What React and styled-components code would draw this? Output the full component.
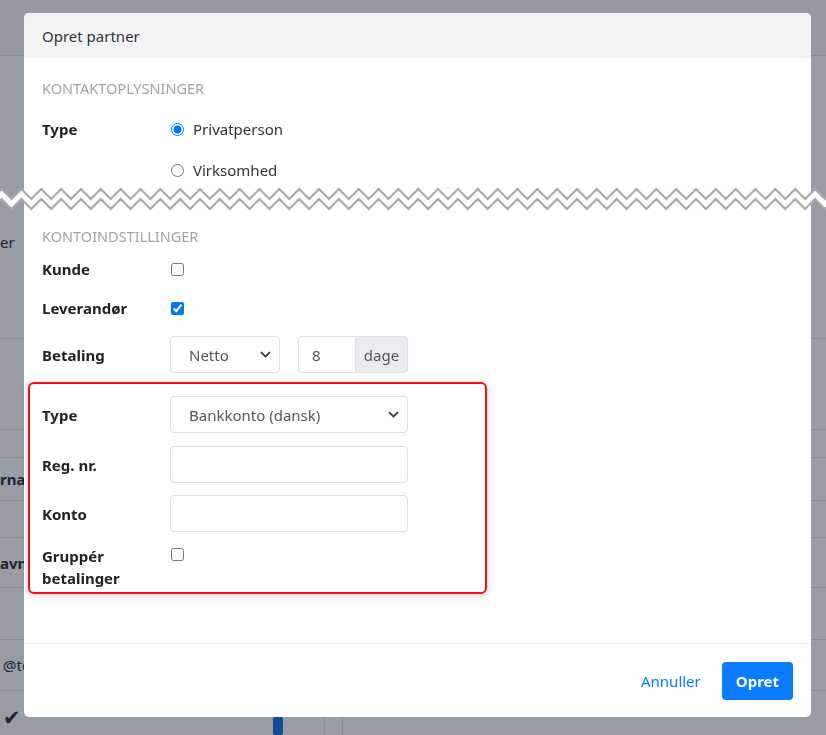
import React from 'react';
import styled, { createGlobalStyle } from 'styled-components';

const GlobalStyle = createGlobalStyle`
  html, body {
    margin: 0;
    padding: 0;
  }
  body {
    width: 826px;
    height: 735px;
    overflow: hidden;
    font-family: "Noto Sans", "Open Sans", sans-serif;
    background: #fff;
  }
`;

/* page behind the dialog */

const Page = styled.div`
  width: 826px;
  height: 735px;
  overflow: hidden;
  background: #fff;
  color: #212529;
  font-size: 15px;
`;

const BgRow = styled.div`
  display: flex;
  align-items: ${({ $top }) => ($top ? 'flex-start' : 'center')};
  box-sizing: border-box;
  height: ${({ $h }) => $h}px;
  background: ${({ $bg }) => $bg || 'transparent'};
  border-bottom: ${({ $line }) => ($line ? '1px solid #dfe2e6' : 'none')};
  font-weight: ${({ $bold }) => ($bold ? 700 : 400)};
`;

const BgText = styled.span`
  margin-left: ${({ $shift }) => $shift || 0}px;
  white-space: nowrap;
  line-height: 22px;
  font-size: ${({ $size }) => $size || 15}px;
`;

const BgCell = styled.div`
  display: flex;
  align-items: flex-start;
  box-sizing: border-box;
  width: ${({ $w }) => $w}px;
  height: 100%;
  padding-top: ${({ $pt }) => $pt || 0}px;
  border-right: ${({ $line }) => ($line ? '1px solid #dfe2e6' : 'none')};
`;

const BlueMark = styled.span`
  width: 10px;
  height: 18px;
  margin: 11px 0 0 ${({ $shift }) => $shift}px;
  border-radius: 2px;
  background: #1668e3;
`;

const Backdrop = styled.div`
  position: fixed;
  inset: 0;
  background: rgba(26, 35, 55, 0.45);
`;

/* dialog */

const Modal = styled.div`
  position: fixed;
  top: 13px;
  left: 24px;
  width: 787px;
  height: 704px;
  display: flex;
  flex-direction: column;
  background: #fff;
  border-radius: 5px;
  color: #212529;
`;

const ModalHeader = styled.div`
  display: flex;
  align-items: center;
  height: 45px;
  padding: 0 18px;
  background: #f2f3f4;
  border-radius: 5px 5px 0 0;
  font-size: 15px;
  color: #333;
`;

const ModalBody = styled.div`
  flex: 1;
  padding: 20px 18px 0;
`;

const SectionTitle = styled.div`
  margin-top: ${({ $mt }) => $mt || 0}px;
  line-height: 20px;
  font-size: 14.5px;
  color: #a3a3a3;
  text-transform: uppercase;
`;

const FieldRow = styled.div`
  display: grid;
  grid-template-columns: 128px auto;
  align-items: ${({ $start }) => ($start ? 'start' : 'center')};
  margin-top: ${({ $mt }) => $mt || 0}px;
`;

const Label = styled.div`
  font-size: 15px;
  font-weight: 700;
  line-height: 22px;
  color: #222;
`;

const Options = styled.div`
  display: flex;
  flex-direction: column;
  gap: 19px;
`;

const Option = styled.label`
  display: flex;
  align-items: center;
  gap: 9px;
  font-size: 15px;
  line-height: 22px;
  color: #333;
`;

const Tick = styled.input`
  width: 13px;
  height: 13px;
  margin: ${({ $mt }) => $mt || 0}px 0 0 1px;
  accent-color: #0075ff;
`;

const Controls = styled.div`
  display: flex;
  align-items: center;
  gap: 18px;
`;

const SelectBox = styled.div`
  display: flex;
  align-items: center;
  justify-content: space-between;
  box-sizing: border-box;
  width: ${({ $w }) => $w}px;
  height: 37px;
  padding: 0 8px 0 18px;
  border: 1px solid #dcdfe3;
  border-radius: 4px;
  font-size: 15px;
  color: #555;
`;

const InputGroup = styled.div`
  display: flex;
  height: 37px;
`;

const TextBox = styled.div`
  display: flex;
  align-items: center;
  box-sizing: border-box;
  width: ${({ $w }) => $w}px;
  height: 37px;
  padding-left: 13px;
  border: 1px solid #dcdfe3;
  border-radius: ${({ $joined }) => ($joined ? '4px 0 0 4px' : '4px')};
  font-size: 15px;
  color: #555;
`;

const Addon = styled.div`
  display: flex;
  align-items: center;
  justify-content: center;
  box-sizing: border-box;
  width: 52px;
  border: 1px solid #dcdfe3;
  border-left: none;
  border-radius: 0 4px 4px 0;
  background: #e9ecef;
  font-size: 15px;
  color: #555;
`;

const Highlight = styled.div`
  box-sizing: border-box;
  width: 459px;
  margin: 9px 0 0 -14px;
  padding: 12px 12px 3px;
  border: 2px solid #e8141c;
  border-radius: 6px;
  box-shadow: 0 1px 7px rgba(0, 0, 0, 0.22);
`;

const TornEdge = styled.svg`
  display: block;
  width: 826px;
  height: 28px;
  margin: 4px 0 0 -42px;
`;

const ModalFooter = styled.div`
  display: flex;
  align-items: center;
  justify-content: flex-end;
  gap: 9px;
  height: 74px;
  padding: 0 18px;
  border-top: 1px solid #eceef0;
  box-sizing: border-box;
`;

const LinkButton = styled.button`
  padding: 6px 12px;
  border: none;
  background: none;
  font-family: inherit;
  font-size: 15px;
  color: #0a7cff;
  cursor: pointer;
`;

const PrimaryButton = styled.button`
  height: 38px;
  padding: 0 14px;
  border: none;
  border-radius: 4px;
  background: #0a7cff;
  font-family: inherit;
  font-size: 15px;
  font-weight: 700;
  color: #fff;
  cursor: pointer;
`;

function Chevron() {
  return (
    <svg width="11" height="7" viewBox="0 0 11 7">
      <path d="M1 1.2 L5.5 5.6 L10 1.2" fill="none" stroke="#333" strokeWidth="1.8" />
    </svg>
  );
}

function zigPoints(offset) {
  const period = 19.84;
  const pts = [];
  for (let i = -2; i <= 86; i++) {
    const x = 1.6 + (i * period) / 2;
    const y = (i % 2 === 0 ? 4 : 14) + offset;
    pts.push(`${x.toFixed(2)},${y}`);
  }
  return pts;
}

function Tear() {
  const top = zigPoints(0);
  const bottom = zigPoints(10);
  const fill = [...top, ...bottom.slice().reverse()].join(' ');
  return (
    <TornEdge viewBox="0 0 826 28">
      <polygon points={fill} fill="#fff" />
      <polyline points={top.join(' ')} fill="none" stroke="#a9a9a9" strokeWidth="2" />
      <polyline points={bottom.join(' ')} fill="none" stroke="#a9a9a9" strokeWidth="2" />
    </TornEdge>
  );
}

function Background() {
  return (
    <Page>
      <BgRow $h={56} $line $bg="#fafbfc" />
      <BgRow $h={174} />
      <BgRow $h={24}>
        <BgText>er</BgText>
      </BgRow>
      <BgRow $h={85} $line />
      <BgRow $h={91} $line />
      <BgRow $h={28} $line />
      <BgRow $h={43} $line $bold>
        <BgText>rnativ</BgText>
      </BgRow>
      <BgRow $h={37} $line />
      <BgRow $h={50} $line $bold>
        <BgText>avn</BgText>
      </BgRow>
      <BgRow $h={52} $line />
      <BgRow $h={51} $line>
        <BgText $shift={3}>@test.dk</BgText>
      </BgRow>
      <BgRow $h={60} $top>
        <BgCell $w={325} $pt={15} $line>
          <BgText $shift={3} $size={21}>✔</BgText>
          <BlueMark $shift={252} />
        </BgCell>
        <BgCell $w={18} $line />
      </BgRow>
    </Page>
  );
}

export default function App() {
  return (
    <>
      <GlobalStyle />
      <Background />
      <Backdrop />
      <Modal>
        <ModalHeader>Opret partner</ModalHeader>
        <ModalBody>
          <SectionTitle>Kontaktoplysninger</SectionTitle>
          <FieldRow $start $mt={20}>
            <Label>Type</Label>
            <Options>
              <Option>
                <Tick type="radio" name="type" defaultChecked />
                Privatperson
              </Option>
              <Option>
                <Tick type="radio" name="type" />
                Virksomhed
              </Option>
            </Options>
          </FieldRow>

          <Tear />

          <SectionTitle $mt={13}>Kontoindstillinger</SectionTitle>
          <FieldRow $mt={12}>
            <Label>Kunde</Label>
            <Tick type="checkbox" />
          </FieldRow>
          <FieldRow $mt={17}>
            <Label>Leverandør</Label>
            <Tick type="checkbox" defaultChecked />
          </FieldRow>
          <FieldRow $mt={17}>
            <Label>Betaling</Label>
            <Controls>
              <SelectBox $w={110}>
                Netto
                <Chevron />
              </SelectBox>
              <InputGroup>
                <TextBox $w={58} $joined>8</TextBox>
                <Addon>dage</Addon>
              </InputGroup>
            </Controls>
          </FieldRow>

          <Highlight>
            <FieldRow>
              <Label>Type</Label>
              <SelectBox $w={238}>
                Bankkonto (dansk)
                <Chevron />
              </SelectBox>
            </FieldRow>
            <FieldRow $mt={13}>
              <Label>Reg. nr.</Label>
              <TextBox $w={238} />
            </FieldRow>
            <FieldRow $mt={12}>
              <Label>Konto</Label>
              <TextBox $w={238} />
            </FieldRow>
            <FieldRow $start $mt={13}>
              <Label>Gruppér betalinger</Label>
              <Tick type="checkbox" $mt={3} />
            </FieldRow>
          </Highlight>
        </ModalBody>
        <ModalFooter>
          <LinkButton>Annuller</LinkButton>
          <PrimaryButton>Opret</PrimaryButton>
        </ModalFooter>
      </Modal>
    </>
  );
}
